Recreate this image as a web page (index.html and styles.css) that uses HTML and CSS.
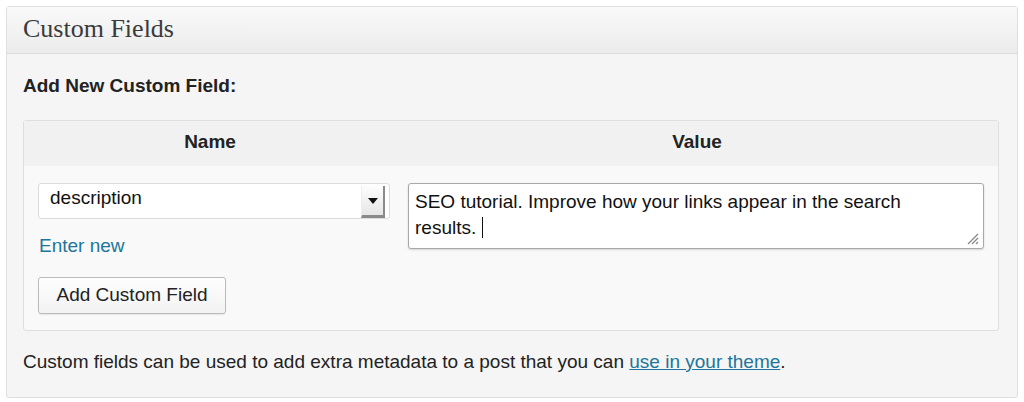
FILE: index.html
```html
<!DOCTYPE html>
<html>
<head>
<meta charset="utf-8">
<link rel="stylesheet" href="styles.css">
</head>
<body>
<div class="postbox">
  <h3 class="hndle">Custom Fields</h3>
  <div class="inside">
    <h4 class="add-title">Add New Custom Field:</h4>
    <div class="meta-table">
      <div class="th">Name</div>
      <div class="th">Value</div>
      <div class="td name-cell">
        <div class="select">
          <span class="select-text">description</span>
          <span class="select-btn"><span class="tri"></span></span>
        </div>
        <a class="enter-new" href="#">Enter new</a>
        <button class="btn" type="button">Add Custom Field</button>
      </div>
      <div class="td value-cell">
        <div class="textarea">SEO tutorial. Improve how your links appear in the search results. <span class="caret"></span>
          <svg class="grip" width="14" height="14" viewBox="0 0 14 14"><path d="M13 3 L3 13 M13 7 L7 13 M13 11 L11 13" stroke="#888" stroke-width="1.3" fill="none"/></svg>
        </div>
      </div>
    </div>
    <p class="note">Custom fields can be used to add extra metadata to a post that you can <a href="#">use in your theme</a>.</p>
  </div>
</div>
</body>
</html>
```
FILE: styles.css
```css
* { box-sizing: border-box; }
body {
  margin: 0;
  padding: 6px 0 0 6px;
  background: #fff;
  font-family: "Liberation Sans", Arial, sans-serif;
  font-size: 19px;
  color: #333;
}
.postbox {
  width: 1012px;
  height: 392px;
  border: 1px solid #dfdfdf;
  border-radius: 3px;
  background: #f5f5f5;
  box-shadow: 0 1px 1px rgba(0,0,0,0.04);
}
.hndle {
  margin: 0;
  height: 47px;
  display: flex;
  align-items: center;
  padding: 0 0 2px 16px;
  background: linear-gradient(#f9f9f9, #ececec);
  border-bottom: 1px solid #dcdcdc;
  font-family: "Liberation Serif", Georgia, serif;
  font-weight: normal;
  font-size: 26px;
  color: #3a3a3a;
}
.inside {
  padding: 0 18px 0 16px;
}
.add-title {
  margin: 20px 0 22px;
  line-height: 24px;
  font-size: 19px;
  font-weight: bold;
  color: #222;
}
.meta-table {
  width: 976px;
  display: grid;
  grid-template-columns: 372px 1fr;
  border: 1px solid #dfdfdf;
  border-radius: 3px;
  background: #f9f9f9;
}
.th {
  height: 45px;
  background: #f1f1f1;
  display: flex;
  align-items: center;
  justify-content: center;
  font-weight: bold;
  color: #222;
  padding-bottom: 4px;
}
.td { padding-top: 17px; }
.name-cell {
  padding-left: 14px;
  padding-bottom: 16px;
  display: flex;
  flex-direction: column;
  align-items: flex-start;
}
.select {
  width: 352px;
  height: 36px;
  background: #fff;
  border: 1px solid #dcdcdc;
  border-radius: 3px;
  display: flex;
  align-items: center;
  justify-content: space-between;
  padding: 0 4px 0 11px;
  color: #111;
}
.select-text { margin-top: -6px; }
.select-btn {
  width: 24px;
  height: 32px;
  background: linear-gradient(#fdfdfd, #e6e6e6);
  border-left: 1px solid #eee;
  border-right: 2px solid #8a8a8a;
  border-bottom: 3px solid #8a8a8a;
  display: flex;
  align-items: center;
  justify-content: center;
  margin-top: 2px;
}
.tri {
  width: 0; height: 0;
  border-left: 5px solid transparent;
  border-right: 5px solid transparent;
  border-top: 6px solid #111;
}
.enter-new {
  margin-top: 15px;
  line-height: 24px;
  color: #21759b;
  text-decoration: none;
  padding-left: 1px;
}
.btn {
  margin-top: 19px;
  width: 188px;
  height: 37px;
  font-family: "Liberation Sans", Arial, sans-serif;
  font-size: 19px;
  color: #222;
  background: linear-gradient(#fefefe, #f2f2f2);
  border: 1px solid #bbb;
  border-radius: 3px;
  box-shadow: 0 1px 1px rgba(0,0,0,0.08);
  padding: 0 0 2px;
}
.value-cell { padding-left: 12px; }
.textarea {
  position: relative;
  width: 576px;
  height: 66px;
  background: #fff;
  border: 1px solid #a9a9a9;
  border-radius: 3px;
  box-shadow: 0 1px 2px rgba(0,0,0,0.15);
  padding: 5px 50px 5px 6px;
  font-size: 19px;
  line-height: 26px;
  color: #111;
}
.caret {
  display: inline-block;
  width: 1px;
  height: 21px;
  background: #111;
  vertical-align: -4px;
}
.grip {
  position: absolute;
  right: 4px;
  bottom: 3px;
}
.note {
  margin: 19px 0 0;
  line-height: 24px;
  color: #222;
}
.note a {
  color: #21759b;
  text-decoration: underline;
}
```
